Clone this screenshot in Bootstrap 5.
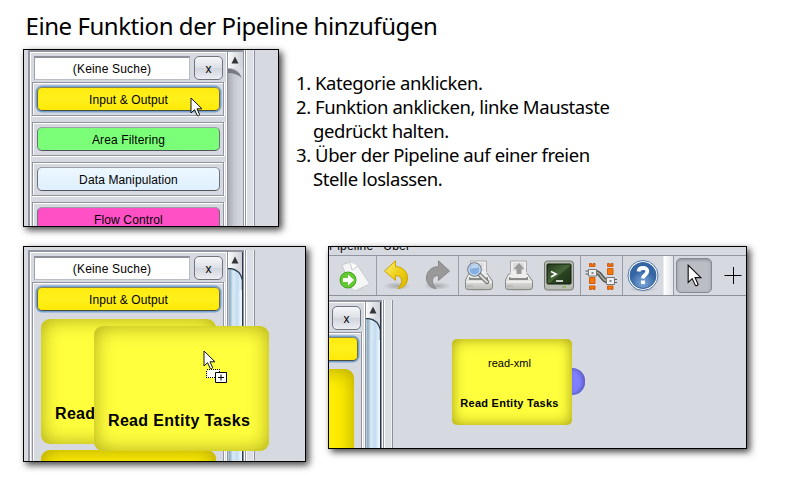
<!DOCTYPE html>
<html lang="de">
<head>
<meta charset="utf-8">
<title>Eine Funktion der Pipeline hinzufügen</title>
<link href="https://cdn.jsdelivr.net/npm/bootstrap@5.3.0/dist/css/bootstrap.min.css" rel="stylesheet">
<style>
body{width:800px;height:500px;background:#fff;color:#000;font-family:"Liberation Sans",Arial,sans-serif;font-size:12px;line-height:1.2}
.guide{font-family:"Noto Sans","Open Sans",sans-serif}
h1.guide{font-size:24px;line-height:30px;letter-spacing:-.44px;padding:11px 0 0 25.500px;height:49px;white-space:nowrap}
.steps{font-size:18.5px;line-height:24px;letter-spacing:-.43px;padding:22px 0 0 17px;white-space:nowrap}
.steps div{padding-left:17px;text-indent:-17px}
.shot{border:1px solid #000;background:#d6d9e0;box-shadow:3px 3px 7px rgba(0,0,0,.75)}
.shot-a{width:256px;height:178px}
.shot-b{width:283px;height:216px}
.shot-c{width:419px;height:203px;margin-left:22px}
.lower{padding:19px 0 0 23px}
/* palette column: list, scrollbar, split divider */
.palette{width:228px;margin-left:4px}
.frame{width:216px;border:2px solid #9295a0;border-right-width:1px;border-bottom:0}
.list{width:197px;border:1px solid #fff;border-bottom:0;padding:3px 2px 0 1px}
.list>.d-flex{padding-left:2px;margin-bottom:2px}
.field{width:156px;height:24px;background:#fff;border:1px solid #b9bcc4;border-top:2px solid #8e9199;border-left-color:#9da0a8;line-height:22px;text-align:center;letter-spacing:.18px}
.clear{width:29px;height:24px;padding:0;border:1px solid #71757f;border-radius:5px;background:linear-gradient(#f6f7f9,#dcdfe5 50%,#d0d4dc 52%,#eceef2);font-size:12px;line-height:24px;color:#000}
.group{width:192px;height:34px;border:1px solid #9295a0;box-shadow:inset 1px 1px #fff,0 1px #fff,1px 0 #fff;padding:4px;margin-bottom:6px}
.cat{width:183px;height:24px;padding:0;border:1px solid #6c7078;border-top-color:#999da5;border-bottom-color:#50545c;border-radius:5px;font-size:12px;line-height:24px;letter-spacing:.12px;color:#000;display:block}
.c-yellow{background:linear-gradient(#ffea10,#fff01b 50%,#ffea08)}
.c-focus{border-color:#8a8452 #70684a #4e4a3a;box-shadow:0 0 0 1.5px #73a4d1}
.c-green{background:#7bff79}.c-blue{background:linear-gradient(#edf7ff,#dff0ff)}.c-pink{background:#ff50c6}
.open{height:260px}
.scroll{width:16px;border-left:1px solid #8e919a;background:linear-gradient(90deg,#a9acb4,#c8cbd3 45%,#d5d8df)}
.up{height:16px;background:linear-gradient(90deg,#f6f7f9,#cdd0d7);border-left:1px solid #fff}
.up svg,.curve svg,.tool svg{display:block}
.divider{width:11px;background:#dcdfe5;border-left:1px solid #fff;border-right:1px solid #8e919a;box-shadow:inset 1px 0 #9295a0,inset 2px 0 #fff,inset -1px 0 #eff0f4}
.func{width:175px;height:125px;border-radius:9px;background:#ffff3e;box-shadow:inset 0 0 20px rgba(120,110,0,.62);font-size:16px;font-weight:700;padding:85px 0 0 14px;white-space:nowrap;letter-spacing:.33px}
.func-idle{background:#fe0;margin-top:6px}
.drag{left:70px;top:79px}
.pointer{z-index:3}
.thumb{background:linear-gradient(90deg,#c5d8e7,#8eabbd 12%,#dbebf6 35%,#c3dcf0 65%,#edf7ff 95%);border-right:1px solid #27394a}
/* application window */
.menu{height:9px;border-bottom:1px solid #9295a0}
.menu span{margin-top:-8px;line-height:14px;letter-spacing:.2px}
.tools{height:40px;border-bottom:1px solid #8e919a}
.tool{padding:4px 0 0 4px;gap:8px;border-right:1px solid #9a9da6}
.t1{width:48px;padding-left:9px}.t2{width:82px}.t3{width:122px}.t4{width:42px}
.t5{width:51px;background:linear-gradient(90deg,transparent 40px,#fff 41px,#e0e3e8)}
.pick{width:36px;height:35px;margin:2px 0 0 2px;border:1px solid #878a92;border-radius:5px;background:#bbbdc4;box-shadow:inset 0 1px 3px #8a8d95}
.pan{height:152px}
.shifted{margin-left:-163px;margin-top:4px}
.canvas{padding:43px 0 0 58px}
.node{width:120px;height:86px;border-radius:5px;background:#ffff3e;box-shadow:inset 0 0 14px rgba(120,110,0,.7);font-size:11px;padding:18px 5px 0 0;text-align:center}
.node b{display:block;margin:27px -4px 0 0;padding-right:4px;white-space:nowrap;letter-spacing:.26px}
.port{width:13px;height:27px;margin-top:29px;border-radius:0 13px 13px 0;background:#8080ff;box-shadow:inset -2px 0 4px #5656b5}
</style>
<script src="https://cdn.jsdelivr.net/npm/bootstrap@5.3.0/dist/js/bootstrap.bundle.min.js"></script>
</head>
<body class="overflow-hidden">
<svg width="0" height="0" class="position-absolute">
<defs>
<symbol id="arrow" viewBox="0 0 13 20"><path d="M1 1V16L4.500 12.700L7.300 18.600Q9 19.200 9.700 17.800L7 11.800H12Z" fill="#fff" stroke="#111" stroke-width="1"/></symbol>
<symbol id="tri" viewBox="0 0 14 16"><path d="M2.500 11.500L6 4.500L9.500 11.500Z" fill="#353535"/></symbol>
<symbol id="cap" viewBox="0 0 15 22"><path d="M0 .5H3Q12 2 14.500 12V22H0Z" fill="url(#blue)"/><path d="M0 .7H3Q12 2 14.400 12V22" fill="none" stroke="#27394a" stroke-width="1.300"/></symbol>
<linearGradient id="blue"><stop stop-color="#c5d8e7"/><stop offset=".12" stop-color="#8eabbd"/><stop offset=".35" stop-color="#dbebf6"/><stop offset=".65" stop-color="#c3dcf0"/><stop offset="1" stop-color="#edf7ff"/></linearGradient>
<linearGradient id="metal" x2="0" y2="1"><stop stop-color="#fafafa"/><stop offset="1" stop-color="#bcbcb8"/></linearGradient>
<linearGradient id="gold" x2="1" y2="1"><stop stop-color="#fff27a"/><stop offset=".5" stop-color="#efd017"/><stop offset="1" stop-color="#d9b500"/></linearGradient>
<linearGradient id="screen" x2="1" y2="1"><stop stop-color="#23391b"/><stop offset=".5" stop-color="#47673a"/><stop offset=".55" stop-color="#2a4420"/><stop offset="1" stop-color="#1d3216"/></linearGradient>
<radialGradient id="shade"><stop stop-color="#777" stop-opacity=".5"/><stop offset="1" stop-color="#777" stop-opacity="0"/></radialGradient>
<radialGradient id="help" cy=".8"><stop stop-color="#7fa9db"/><stop offset="1" stop-color="#3465a4"/></radialGradient>
<symbol id="printer" viewBox="0 0 32 32"><ellipse cx="16" cy="29" rx="15" ry="2.500" fill="url(#shade)"/><path d="M7.500 1H23.500V18H7.500Z" fill="#eee" stroke="#aaa"/><path d="M10 4H21M10 6H21M10 8H19M10 10H21" stroke="#c8c8c8"/><path d="M5.500 14H24.500L29.500 21V27Q29.500 29.500 27 29.500H5Q2.500 29.500 2.500 27V20Z" fill="url(#metal)" stroke="#888a85"/><path d="M6 17H25V20H6Z" fill="#888a85"/><path d="M7.500 12H23.500V18H7.500Z" fill="#eee"/><path d="M3 22H29" stroke="#fff"/><path d="M5 25V27M7 25V27M9 25V27" stroke="#aaa"/></symbol>
</defs>
</svg>

<h1 class="guide fw-normal m-0">Eine Funktion der Pipeline hinzufügen</h1>

<div class="d-flex" style="padding-left:23px">
  <section class="shot shot-a overflow-hidden position-relative flex-shrink-0">
    <div class="palette d-flex h-100">
      <div class="frame d-flex flex-shrink-0">
        <div class="list flex-shrink-0">
          <div class="d-flex gap-1"><div class="field">(Keine Suche)</div><button class="btn clear">x</button></div>
          <div class="group"><button class="btn cat c-yellow c-focus">Input &amp; Output</button></div>
          <div class="group"><button class="btn cat c-green">Area Filtering</button></div>
          <div class="group"><button class="btn cat c-blue">Data Manipulation</button></div>
          <div class="group"><button class="btn cat c-pink">Flow Control</button></div>
        </div>
        <div class="scroll"><div class="up"><svg width="14" height="16"><use href="#tri"/></svg></div>
          <div class="curve"><svg width="15" height="12"><path d="M0 0H3Q11 1 14 10L15 0Z" fill="#d9dce2"/><path d="M0 1H3Q11 2 14 10Q8 5 0 5Z" fill="#60636b" opacity=".75"/></svg></div></div>
      </div>
      <div class="divider flex-shrink-0"></div>
    </div>
    <svg class="pointer position-absolute" style="left:166px;top:47px" width="13" height="20"><use href="#arrow"/></svg>
  </section>
  <div class="steps guide">
    <div>1. Kategorie anklicken.</div>
    <div>2. Funktion anklicken, linke Maustaste<br><span class="d-block" style="text-indent:0">gedrückt halten.</span></div>
    <div>3. Über der Pipeline auf einer freien<br><span class="d-block" style="text-indent:0">Stelle loslassen.</span></div>
  </div>
</div>

<div class="lower d-flex align-items-start">
  <section class="shot shot-b overflow-hidden position-relative flex-shrink-0">
    <div class="palette d-flex h-100" style="margin-top:3px">
      <div class="frame d-flex flex-shrink-0">
        <div class="list flex-shrink-0">
          <div class="d-flex gap-1"><div class="field">(Keine Suche)</div><button class="btn clear">x</button></div>
          <div class="group open"><button class="btn cat c-yellow c-focus">Input &amp; Output</button>
            <div style="padding:8px 0 0 4px"><div class="func">Read</div><div class="func func-idle"></div></div>
          </div>
        </div>
        <div class="scroll thumb d-flex flex-column"><div class="up"><svg width="14" height="16"><use href="#tri"/></svg></div>
          <div class="curve" style="background:#d6d9e0"><svg width="15" height="22"><use href="#cap"/></svg></div></div>
      </div>
      <div class="divider flex-shrink-0"></div>
    </div>
    <div class="func drag position-absolute">Read Entity Tasks</div>
    <svg class="pointer position-absolute" style="left:179px;top:103px" width="25" height="34" viewBox="0 0 25 34"><use href="#arrow" width="13" height="20"/><path d="M3.500 19.500H16.500V27.500H3.500Z" fill="#fff" stroke="#000" stroke-dasharray="1 1" shape-rendering="crispEdges"/><path d="M12.500 22.500H23.500V32.500H12.500Z" fill="#fff" stroke="#000"/><path d="M15 27.500H21M18 24.500V30.500" stroke="#000"/></svg>
  </section>

  <section class="shot shot-c overflow-hidden flex-shrink-0">
    <div class="menu d-flex overflow-hidden"><span>Pipeline</span><span style="padding-left:10px">Über</span></div>
    <div class="tools d-flex">
      <div class="tool d-flex t1">
        <svg width="32" height="32" viewBox="0 0 32 32"><path d="M4 5L12 2L14 7L20 6L32 24L17 31L13 28Z" fill="#f4f5f5" stroke="#c6c8cb"/><path d="M12 2L14 10L20 6" fill="#fff" stroke="#ccc"/><circle cx="10" cy="20" r="8" fill="#64c832" stroke="#42a51d"/><path d="M5 18H10V14.500L16 20L10 25.500V22H5Z" fill="#fff"/></svg>
      </div>
      <div class="tool d-flex t2">
        <svg width="32" height="32" viewBox="0 0 32 32"><ellipse cx="16" cy="26" rx="14" ry="4" fill="url(#shade)"/><path d="M3.500 11L14.500 .8V6.500C23 7 27 13 26.500 19C26 25 21 28.500 17 28.500C23 22 21 15.500 14.500 15.500V20.500Z" fill="url(#gold)" stroke="#c9a400"/></svg>
        <svg width="32" height="32" viewBox="0 0 32 32"><ellipse cx="16" cy="26" rx="14" ry="4" fill="url(#shade)"/><path d="M28.500 11L17.500 .8V6.500C9 7 5 13 5.500 19C6 25 11 28.500 15 28.500C9 22 11 15.500 17.500 15.500V20.500Z" fill="#999" stroke="#888"/></svg>
      </div>
      <div class="tool d-flex t3">
        <svg width="32" height="32" viewBox="0 0 32 32"><use href="#printer"/><path d="M17 15L24 22" stroke="#777" stroke-width="4.500" stroke-linecap="round"/><path d="M17 15L24 22" stroke="#ddd" stroke-width="2" stroke-linecap="round"/><circle cx="11.500" cy="9.500" r="6.800" fill="#85afe0" stroke="#6d7078"/><circle cx="11.500" cy="9.500" r="5.600" fill="none" stroke="#e8edf4"/><path d="M7.500 9Q8 5 12 5Q15 5 15 8Q12 7 7.500 9" fill="#c6daf0"/></svg>
        <svg width="32" height="32" viewBox="0 0 32 32"><use href="#printer"/><path d="M16 3L21.500 9H18.500V14H13.500V9H10.500Z" fill="#999"/></svg>
        <svg width="32" height="32" viewBox="0 0 32 32"><rect x="1.500" y="1" width="29" height="29" rx="3" fill="#babdb6" stroke="#757770"/><rect x="4" y="4" width="24" height="20" rx="1" fill="url(#screen)" stroke="#111c0d"/><path d="M8 11.500L13 14L8 17" fill="none" stroke="#fff" stroke-width="1.700"/><path d="M13 21H20" stroke="#fff" stroke-width="1.500"/><path d="M19 27H23" stroke="#888"/><circle cx="21.500" cy="26.800" r="1" fill="#73d216"/></svg>
      </div>
      <div class="tool d-flex t4">
        <svg width="32" height="32" viewBox="0 0 32 32"><g fill="#f57900" stroke="#c74d00" stroke-width=".8"><path d="M4.500 3.500H6.500V5H8V3.500H10V6.500H4.500ZM4.500 17.500H10V23.500H4.500ZM4.500 26H10V29.500H8V28.500H6.500V29.500H4.500ZM22.500 3.500H24.500V5H26V3.500H28V6.500H22.500ZM22.500 8.500H28V14.500H22.500ZM22.500 26H28V29.500H26V28.500H24.500V29.500H22.500Z"/></g><path d="M.5 11H4M.5 14H4M28 19.500H32M28 22.500H32" stroke="#555753"/><path d="M10 12C17 12 16 21 23 21" fill="none" stroke="#555753" stroke-width="4.500"/><path d="M10 12C17 12 16 21 23 21" fill="none" stroke="#a6a8a0" stroke-width="1.600"/><path d="M3.500 9.500H11.500V16H3.500ZM21.500 17.500H29.500V24.500H21.500Z" fill="#eee" stroke="#777"/><path d="M6.500 12H8.500V14H6.500ZM24.500 20H26.500V22H24.500Z" fill="#888"/></svg>
      </div>
      <div class="tool d-flex t5">
        <svg width="32" height="32" viewBox="0 0 32 32"><ellipse cx="16" cy="29" rx="14" ry="3" fill="url(#shade)"/><circle cx="16" cy="15.500" r="15" fill="#fff" stroke="#4d76aa"/><circle cx="16" cy="15.500" r="13" fill="url(#help)" stroke="#3b659f"/><path d="M11.500 11.500Q12 8 16 8Q20.500 8 20.300 11.500Q20 13.500 18 15Q16 16.500 16 18.500" fill="none" stroke="#fff" stroke-width="3.800"/><path d="M14 20.500H18V24H14Z" fill="#fff"/></svg>
      </div>
      <div class="pick d-flex"><svg style="margin:5px 0 0 10px" width="15" height="23" viewBox="0 0 13 20"><use href="#arrow"/></svg></div>
      <svg style="margin:11px 0 0 12px" width="18" height="18" viewBox="0 0 18 18"><path d="M.5 8.500H17.500M9.500 0V17" stroke="#000" stroke-width="1"/></svg>
    </div>
    <div class="d-flex pan">
      <div class="palette shifted d-flex flex-shrink-0">
        <div class="frame d-flex flex-shrink-0">
          <div class="list flex-shrink-0">
            <div class="d-flex gap-1"><div class="field"></div><button class="btn clear">x</button></div>
            <div class="group open"><button class="btn cat c-yellow c-focus"></button>
              <div style="padding:8px 0 0 4px"><div class="func func-idle m-0"></div></div>
            </div>
          </div>
          <div class="scroll thumb"><div class="up"><svg width="14" height="16"><use href="#tri"/></svg></div>
            <div class="curve" style="background:#d6d9e0"><svg width="15" height="22"><use href="#cap"/></svg></div></div>
        </div>
        <div class="divider flex-shrink-0"></div>
      </div>
      <div class="canvas d-flex align-items-start">
        <div class="node">read-xml<b>Read Entity Tasks</b></div><div class="port"></div>
      </div>
    </div>
  </section>
</div>
</body>
</html>
